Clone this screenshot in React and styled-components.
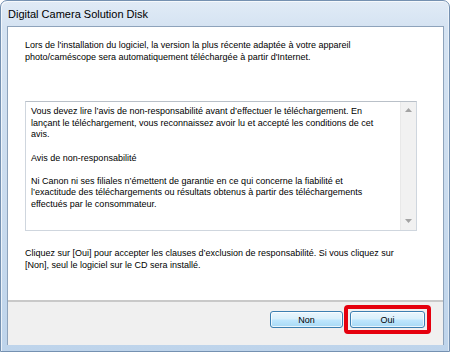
import React from "react";
import styled, { createGlobalStyle } from "styled-components";

const Global = createGlobalStyle`
  html, body { margin: 0; padding: 0; background: #ffffff; }
  body { font-family: "Liberation Sans", Arial, sans-serif; }
`;

const Window = styled.div`
  box-sizing: border-box;
  width: 450px;
  height: 352px;
  display: flex;
  flex-direction: column;
  border: 1px solid #7591b1;
  border-radius: 7px 7px 0 0;
  background: linear-gradient(to bottom, #e1ebf6 0px, #d5e3f2 26px, #c9dbee 60%, #bed4eb 100%);
  box-shadow: inset 1px 1px 0 rgba(255, 255, 255, 0.7), inset -1px 0 0 rgba(255, 255, 255, 0.5);
`;

const TitleBar = styled.div`
  height: 25px;
  display: flex;
  align-items: center;
  padding: 1px 0 0 7px;
  box-sizing: border-box;
  font-size: 11px;
  color: #000000;
`;

const Client = styled.div`
  flex: 1;
  margin: 0 5px 0 6px;
  display: flex;
  flex-direction: column;
  border: 1px solid #8ea3bb;
  border-bottom: none;
  background: #ffffff;
`;

const Content = styled.div`
  flex: 1;
  display: flex;
  flex-direction: column;
  padding: 13px 0 0 17px;
`;

const Para = styled.p`
  margin: ${(p) => p.$mt || 0}px 0 0 0;
  font-size: 9px;
  line-height: 11.6px;
  color: #000000;
  white-space: nowrap;
`;

const TextBox = styled.div`
  box-sizing: border-box;
  width: 392px;
  height: 130px;
  margin-top: ${(p) => p.$mt || 0}px;
  display: flex;
  border: 1px solid #cfd6de;
  border-top-color: #b9c0c8;
  background: #ffffff;
`;

const BoxText = styled.div`
  flex: 1;
  padding: 4px 0 0 5px;
  display: flex;
  flex-direction: column;
`;

const Gap = styled.div`
  height: 11.6px;
`;

const ScrollBar = styled.div`
  width: 16px;
  display: flex;
  flex-direction: column;
  justify-content: space-between;
  align-items: center;
  background: #f1f1f1;
  border-left: 1px solid #e8e8e8;
  padding: 6px 0 7px;
  box-sizing: border-box;
`;

const Arrow = styled.svg`
  width: 7px;
  height: 4px;
  display: block;
`;

const Separator = styled.div`
  height: 2px;
  background: #c9c9c9;
`;

const ButtonBar = styled.div`
  height: 43px;
  background: #f0f0f0;
  display: flex;
  justify-content: flex-end;
  align-items: flex-start;
  gap: 1px;
  padding: 3px 12px 0 0;
  box-sizing: border-box;
`;

const Button = styled.button`
  box-sizing: border-box;
  width: ${(p) => p.$w}px;
  height: 17px;
  margin-top: ${(p) => p.$mt || 0}px;
  padding: 0;
  font-family: "Liberation Sans", Arial, sans-serif;
  font-size: 9px;
  color: #000000;
  border: 1px solid #3c7fb1;
  border-radius: 3px;
  background: linear-gradient(to bottom, #eaf6fd 0%, #d9f0fc 45%, #bee6fd 55%, #a7d9f5 100%);
  box-shadow: inset 0 0 0 1px rgba(255, 255, 255, 0.75);
`;

const Highlight = styled.div`
  padding: 2px;
  border: 4px solid #e5000e;
  border-radius: 4px;
  display: flex;
`;

const BottomFrame = styled.div`
  height: 6px;
`;

export default function App() {
  return (
    <>
      <Global />
      <Window>
        <TitleBar>Digital Camera Solution Disk</TitleBar>
        <Client>
          <Content>
            <Para>
              Lors de l'installation du logiciel, la version la plus récente adaptée à votre appareil
              <br />
              photo/caméscope sera automatiquement téléchargée à partir d'Internet.
            </Para>
            <TextBox $mt={38}>
              <BoxText>
                <Para>
                  Vous devez lire l’avis de non-responsabilité avant d’effectuer le téléchargement. En
                  <br />
                  lançant le téléchargement, vous reconnaissez avoir lu et accepté les conditions de cet
                  <br />
                  avis.
                </Para>
                <Gap />
                <Para>Avis de non-responsabilité</Para>
                <Gap />
                <Para>
                  Ni Canon ni ses filiales n’émettent de garantie en ce qui concerne la fiabilité et
                  <br />
                  l’exactitude des téléchargements ou résultats obtenus à partir des téléchargements
                  <br />
                  effectués par le consommateur.
                </Para>
              </BoxText>
              <ScrollBar>
                <Arrow viewBox="0 0 7 4">
                  <path d="M3.5 0 L7 4 L0 4 Z" fill="#a3a3a3" />
                </Arrow>
                <Arrow viewBox="0 0 7 4">
                  <path d="M0 0 L7 0 L3.5 4 Z" fill="#a3a3a3" />
                </Arrow>
              </ScrollBar>
            </TextBox>
            <Para $mt={17}>
              Cliquez sur [Oui] pour accepter les clauses d’exclusion de responsabilité. Si vous cliquez sur
              <br />
              [Non], seul le logiciel sur le CD sera installé.
            </Para>
          </Content>
          <Separator />
          <ButtonBar>
            <Button $w={73} $mt={6}>Non</Button>
            <Highlight>
              <Button $w={75}>Oui</Button>
            </Highlight>
          </ButtonBar>
        </Client>
        <BottomFrame />
      </Window>
    </>
  );
}
